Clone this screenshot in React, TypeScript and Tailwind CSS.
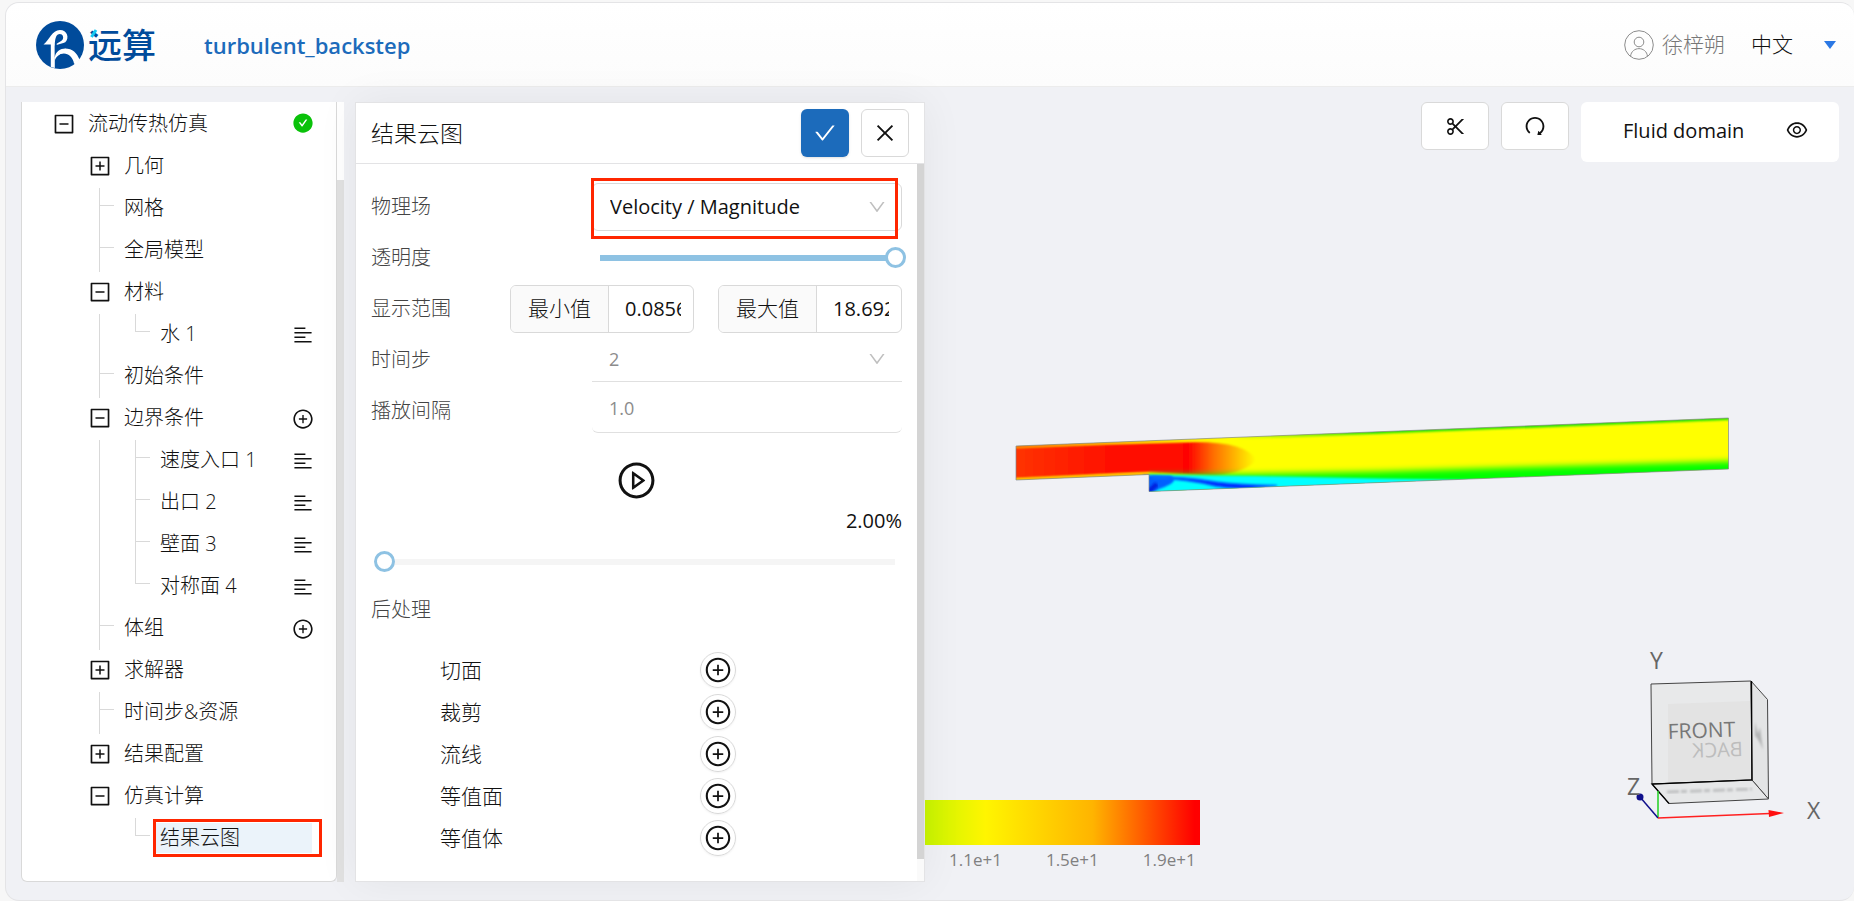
import { useState } from "react";
import type { ReactNode } from "react";
import { clsx } from "clsx";
import {
  AiFillCheckCircle,
  AiOutlineAlignLeft,
  AiOutlineCheck,
  AiOutlineClose,
  AiOutlineDown,
  AiOutlineEye,
  AiOutlineMinusSquare,
  AiOutlinePlayCircle,
  AiOutlinePlusCircle,
  AiOutlinePlusSquare,
  AiOutlineRedo,
  AiOutlineScissor,
} from "react-icons/ai";

type TreeItem = {
  label: string;
  level: 0 | 1 | 2;
  toggle?: "open" | "closed";
  last?: boolean;
  parentLine?: boolean;
  action?: "menu" | "add" | "done";
  selected?: boolean;
};

const tree: TreeItem[] = [
  { label: "流动传热仿真", level: 0, toggle: "open", action: "done" },
  { label: "几何", level: 1, toggle: "closed" },
  { label: "网格", level: 1 },
  { label: "全局模型", level: 1 },
  { label: "材料", level: 1, toggle: "open" },
  { label: "水 1", level: 2, last: true, parentLine: true, action: "menu" },
  { label: "初始条件", level: 1 },
  { label: "边界条件", level: 1, toggle: "open", action: "add" },
  { label: "速度入口 1", level: 2, parentLine: true, action: "menu" },
  { label: "出口 2", level: 2, parentLine: true, action: "menu" },
  { label: "壁面 3", level: 2, parentLine: true, action: "menu" },
  { label: "对称面 4", level: 2, last: true, parentLine: true, action: "menu" },
  { label: "体组", level: 1, action: "add" },
  { label: "求解器", level: 1, toggle: "closed" },
  { label: "时间步&资源", level: 1 },
  { label: "结果配置", level: 1, toggle: "closed" },
  { label: "仿真计算", level: 1, toggle: "open" },
  { label: "结果云图", level: 2, last: true, selected: true },
];

const postItems = ["切面", "裁剪", "流线", "等值面", "等值体"];

const sliderThumb =
  "[&::-webkit-slider-thumb]:appearance-none [&::-webkit-slider-thumb]:size-[21px] [&::-webkit-slider-thumb]:rounded-full [&::-webkit-slider-thumb]:border-[3px] [&::-webkit-slider-thumb]:border-[#8ec2e3] [&::-webkit-slider-thumb]:bg-white";

function Logo() {
  return (
    <div className="flex items-center gap-1 text-[#004b9b]">
      <svg viewBox="0 0 48 48" className="size-12">
        <circle cx="24" cy="24" r="24" fill="#004b9b" />
        <path
          d="M7.500 23.500 C13 19.500 16 9 24 9 C31 9 34 17 29 21.500 C27 23.500 24.500 24 22 26 L20.500 23 C24 20.500 28 19.500 27 15.500 C26 12 21 12.500 20 16 C19 19 18.800 21 18.800 25 V47 L14.800 46 V23.500 Z"
          fill="#fff"
        />
        <path
          d="M18.500 47.500 V37 C19 31 23.500 27.500 29 27.500 C36.500 27.500 41 32 43.500 38.500 L40 43.500 L38 42.500 C37 36 32 32 27 32.500 C22 33 18.500 36 18.500 40 Z"
          fill="#fff"
        />
        <path d="M18.800 24.500 L29 21.500 L29 27.500 L18.800 36 Z" fill="#004b9b" />
        <path
          d="M18.800 36 C20 30.500 24 27.500 29.500 27.500 L28 32 C23 33 19.500 36 18.800 40 Z"
          fill="#fff"
        />
      </svg>
      <span className="relative text-[34px] leading-10 font-medium">
        远算
        <svg
          viewBox="0 0 8 9"
          className="absolute top-1 left-0.5 h-[9px] w-2"
          stroke="#16c8f0"
          strokeWidth="3"
        >
          <path d="M1.500 8 L6 1" />
        </svg>
      </span>
    </div>
  );
}

function Header() {
  return (
    <header className="flex h-[84px] items-center border-b border-[#ececec] bg-linear-to-b from-white to-[#fcfcfc] pr-[18px] pl-[30px]">
      <Logo />
      <h1 className="ml-12 pt-0.5 text-[22px] font-semibold text-[#1c6bbb]">
        turbulent_backstep
      </h1>
      <div className="ml-auto flex items-center text-[21px]">
        <svg
          viewBox="0 0 30 30"
          className="size-[30px]"
          fill="none"
          stroke="#8c8c8c"
        >
          <circle cx="15" cy="15" r="14.300" />
          <circle cx="15" cy="12" r="4.800" />
          <path d="M6.500 26.500 C7.500 16 22.500 16 23.500 26.500" />
        </svg>
        <span className="ml-2 text-[#777]">徐梓朔</span>
        <button type="button" className="ml-[26px] flex items-center gap-[31px]">
          中文
          <svg viewBox="0 0 12 8" className="h-2 w-3" fill="#2b78e4">
            <path d="M0 0 H12 L6 8 Z" />
          </svg>
        </button>
      </div>
    </header>
  );
}

function TreeRow({ item }: { item: TreeItem }) {
  const { label, level, toggle, last, parentLine, action, selected } = item;
  return (
    <li
      className={clsx(
        "flex h-[42px] pr-[22px]",
        level === 0 ? "pl-[33px]" : "pl-[69px]",
      )}
    >
      {level === 2 && (
        <span
          className={clsx(
            "ml-2 w-7 shrink-0 border-l",
            parentLine ? "border-[#d9d9d9]" : "border-transparent",
          )}
        />
      )}
      {toggle ? (
        <button
          type="button"
          aria-label={label}
          className="-ml-[3px] flex w-9 shrink-0 items-center pb-[3px]"
        >
          {toggle === "open" ? (
            <AiOutlineMinusSquare size={24} />
          ) : (
            <AiOutlinePlusSquare size={24} />
          )}
        </button>
      ) : (
        <span className="ml-2 flex w-[25px] shrink-0 flex-col">
          <span className="h-[18px] w-[15px] border-b border-l border-[#d9d9d9]" />
          {!last && <span className="flex-1 border-l border-[#d9d9d9]" />}
        </span>
      )}
      <div className="flex flex-1 items-center pb-[3px]">
        <a
          href="#"
          className={clsx(
            "relative -ml-1 h-[30px] flex-1 pl-1 leading-[30px]",
            selected && "mr-0.5 bg-[#ebf3fa]",
          )}
        >
          {label}
          {selected && (
            <span className="absolute -top-1 -right-[10px] -bottom-1 -left-[3px] border-[3px] border-[#ff2600]" />
          )}
        </a>
      </div>
      {action === "done" && (
        <span className="flex items-center pb-[5px]">
          <AiFillCheckCircle size={22} color="#0ac20a" />
        </span>
      )}
      {(action === "add" || action === "menu") && (
        <button type="button" aria-label={`${label} ${action}`}>
          {action === "add" ? (
            <AiOutlinePlusCircle size={22} />
          ) : (
            <AiOutlineAlignLeft size={22} />
          )}
        </button>
      )}
    </li>
  );
}

function Sidebar() {
  return (
    <aside className="flex w-[323px] shrink-0">
      <ul className="flex-1 rounded-b-md border border-t-0 border-[#d9d9d9] bg-white pt-0.5 text-xl">
        {tree.map((item) => (
          <TreeRow key={item.label} item={item} />
        ))}
      </ul>
      <div className="w-[7px] bg-[#e1e1e1]">
        <div className="h-[10%] bg-white" />
      </div>
    </aside>
  );
}

function Field({
  id,
  label,
  children,
}: {
  id: string;
  label: string;
  children: ReactNode;
}) {
  return (
    <div className="flex h-[51px] items-center justify-between">
      <label htmlFor={id} className="text-[#444]">
        {label}
      </label>
      {children}
    </div>
  );
}

function RangeBox({
  id,
  label,
  value,
}: {
  id: string;
  label: string;
  value: string;
}) {
  return (
    <div className="flex h-12 w-[184px] overflow-hidden rounded-md border border-[#d9d9d9]">
      <label
        htmlFor={id}
        className="flex w-[98px] shrink-0 items-center justify-center border-r border-[#d9d9d9] bg-[#fafafa] text-[21px]"
      >
        {label}
      </label>
      <input
        id={id}
        defaultValue={value}
        className="w-full min-w-0 pr-3 pl-4 font-normal"
      />
    </div>
  );
}

function ResultPanel() {
  const [opacity, setOpacity] = useState(100);
  const [progress, setProgress] = useState(0);

  return (
    <section className="z-10 ml-[11px] flex w-[570px] shrink-0 flex-col border border-[#e3e3e5] bg-white shadow-[0_0_40px_rgba(0,0,0,0.06)]">
      <div className="flex h-[61px] items-center border-b border-[#e3e3e5] px-[15px]">
        <h2 className="text-[23px]">结果云图</h2>
        <button
          type="button"
          aria-label="确定"
          className="ml-auto flex size-12 items-center justify-center rounded-md bg-[#1c6bbb] text-white shadow-sm"
        >
          <AiOutlineCheck size={24} />
        </button>
        <button
          type="button"
          aria-label="关闭"
          className="ml-3 flex size-12 items-center justify-center rounded-md border border-[#d9d9d9]"
        >
          <AiOutlineClose size={24} />
        </button>
      </div>
      <div className="flex flex-1">
        <div className="min-w-0 flex-1 px-[15px] pt-[17px] pb-5 text-xl">
          <Field id="field" label="物理场">
            <div className="relative w-[310px]">
              <select
                id="field"
                className="h-12 w-full appearance-none rounded-md border border-[#d9d9d9] px-[17px] font-normal"
              >
                <option>Velocity / Magnitude</option>
              </select>
              <AiOutlineDown
                size={20}
                color="#bfbfbf"
                className="pointer-events-none absolute top-[14px] right-[15px]"
              />
              <span className="pointer-events-none absolute -top-[5px] right-1 -bottom-2 -left-px border-[3px] border-[#ff2600]" />
            </div>
          </Field>
          <Field id="opacity" label="透明度">
            <input
              id="opacity"
              type="range"
              value={opacity}
              onChange={(e) => setOpacity(Number(e.target.value))}
              className={clsx(
                "-mr-1 h-[21px] w-[316px] appearance-none bg-[linear-gradient(to_right,transparent_10px,#8ec2e3_10px,#8ec2e3_calc(100%-10px),transparent_calc(100%-10px))] bg-[length:100%_6px] bg-center bg-no-repeat",
                sliderThumb,
              )}
            />
          </Field>
          <Field id="min" label="显示范围">
            <div className="flex gap-6">
              <RangeBox id="min" label="最小值" value="0.0856" />
              <RangeBox id="max" label="最大值" value="18.692" />
            </div>
          </Field>
          <Field id="step" label="时间步">
            <div className="relative w-[310px]">
              <select
                id="step"
                className="h-11 w-full appearance-none border-b border-[#e0e0e0] px-[17px] text-lg font-normal text-[#8c8c8c]"
              >
                <option>2</option>
              </select>
              <AiOutlineDown
                size={20}
                color="#bfbfbf"
                className="pointer-events-none absolute top-[11px] right-[15px]"
              />
            </div>
          </Field>
          <Field id="interval" label="播放间隔">
            <input
              id="interval"
              defaultValue="1.0"
              className="h-11 w-[310px] rounded-md border-b border-[#e0e0e0] px-[17px] pb-1 text-lg font-normal text-[#8c8c8c]"
            />
          </Field>
          <div className="mt-6 flex justify-center">
            <button type="button" aria-label="播放">
              <AiOutlinePlayCircle size={41} />
            </button>
          </div>
          <p className="mt-1.5 text-right leading-7 font-normal">2.00%</p>
          <input
            type="range"
            aria-label="播放进度"
            value={progress}
            onChange={(e) => setProgress(Number(e.target.value))}
            className={clsx(
              "mt-4 ml-[3px] block h-[21px] w-full appearance-none bg-[linear-gradient(to_right,transparent_10px,#f5f5f5_10px,#f5f5f5_calc(100%-10px),transparent_calc(100%-10px))] bg-[length:100%_6px] bg-center bg-no-repeat",
              sliderThumb,
            )}
          />
          <h3 className="mt-6 leading-7 text-[#444]">后处理</h3>
          <ul className="mt-[25px] pl-[69px] text-[21px]">
            {postItems.map((name) => (
              <li key={name} className="flex h-[42px] items-center">
                <span className="w-[260px] pt-0.5">{name}</span>
                <button
                  type="button"
                  aria-label={name}
                  className="flex size-9 items-center justify-center rounded-full border border-[#d9d9d9] shadow-xs"
                >
                  <AiOutlinePlusCircle size={28} />
                </button>
              </li>
            ))}
          </ul>
        </div>
        <div className="flex w-[7px] shrink-0 flex-col bg-[#d4d4d4]">
          <div className="mt-auto h-[22px] bg-[#fafafa]" />
        </div>
      </div>
    </section>
  );
}

function FlowContour() {
  return (
    <svg viewBox="0 0 929 130" className="mt-auto mb-[100px] w-full">
      <defs>
        <clipPath id="channel">
          <path d="M91 46 L803.500 18 V69 L224 91.500 V74.500 L91 80 Z" />
        </clipPath>
        <linearGradient id="jet" gradientUnits="userSpaceOnUse" x1="91" x2="331">
          <stop offset="0" stopColor="#ff3300" />
          <stop offset="0.400" stopColor="#ff0f00" />
          <stop offset="0.720" stopColor="#ff0600" />
          <stop offset="0.820" stopColor="#ff6c00" />
          <stop offset="0.910" stopColor="#ffb400" />
          <stop offset="1" stopColor="#ffff00" />
        </linearGradient>
        <linearGradient id="edge" gradientUnits="userSpaceOnUse" x1="91" x2="450">
          <stop offset="0" stopColor="#ff6600" />
          <stop offset="0.400" stopColor="#ffd000" />
          <stop offset="0.600" stopColor="#ffff00" />
          <stop offset="1" stopColor="#22e600" />
        </linearGradient>
        <filter id="soft" x="-5%" y="-30%" width="110%" height="160%">
          <feGaussianBlur stdDeviation="1 0.800" />
        </filter>
        <filter id="softer" x="-5%" y="-60%" width="110%" height="220%">
          <feGaussianBlur stdDeviation="1 3" />
        </filter>
      </defs>
      <g clipPath="url(#channel)">
        <rect x="91" y="0" width="713" height="110" fill="#ffff00" />
        <path
          d="M80 48 L180 44 L270 42 Q322 42 331 60 Q322 72 290 76 L224 72 L80 79 Z"
          fill="url(#jet)"
          filter="url(#soft)"
        />
        <path
          d="M91 46 L804 18"
          stroke="url(#edge)"
          strokeWidth="4"
          filter="url(#soft)"
        />
        <path
          d="M91 80 L224 74"
          stroke="#ffb000"
          strokeWidth="3"
          filter="url(#soft)"
        />
        <path
          d="M224 75 L330 74 L455 71.500 L640 66 L820 61 V90 L224 110 Z"
          fill="#00ff00"
          filter="url(#softer)"
        />
        <path
          d="M224 75 L330 76 L455 78.500 L560 80 L700 76 V120 L224 120 Z"
          fill="#00ffff"
          filter="url(#soft)"
        />
        <path
          d="M218 75 L246 76 Q256 82 234 89 L218 98 Z"
          fill="#0060ff"
          filter="url(#soft)"
        />
        <path
          d="M228 77 Q262 77 285 81 Q310 85 352 85.500 Q316 91 290 86 Q262 79 228 78 Z"
          fill="#0010ff"
          stroke="#0070ff"
          strokeWidth="1.500"
          filter="url(#soft)"
        />
        <path
          d="M223 92 L232 84"
          stroke="#0020e0"
          strokeWidth="5"
          filter="url(#soft)"
        />
      </g>
      <path
        d="M91 46 L803.500 18 V69 L224 91.500 V74.500 L91 80 Z"
        fill="none"
        stroke="#808890"
        strokeOpacity="0.700"
      />
    </svg>
  );
}

function Legend() {
  return (
    <div className="pb-[7px]">
      <div className="h-[45px] w-[275px] bg-[linear-gradient(to_right,#c8f500,#fff500_22%,#ffb400_61%,#ff0000_98%)]" />
      <div className="flex gap-11 pl-6 text-[17px] leading-[30px] font-normal text-[#808080]">
        <span>1.1e+1</span>
        <span>1.5e+1</span>
        <span>1.9e+1</span>
      </div>
    </div>
  );
}

function OrientationCube() {
  return (
    <svg
      viewBox="0 0 254 220"
      className="mb-8 h-[220px] w-[254px]"
      fontFamily="'Open Sans', sans-serif"
      fontWeight="400"
    >
      <defs>
        <filter id="faded" x="-20%" y="-60%" width="140%" height="220%">
          <feGaussianBlur stdDeviation="1" />
        </filter>
      </defs>
      <g stroke="#444" strokeWidth="1" strokeLinejoin="round">
        <path d="M51 54 L151 51 L152 150 L52 154 Z" fill="#e8e9ea" />
        <path d="M151 51 L167.500 69.500 L168.500 169 L152 150 Z" fill="#e3e4e5" />
        <path d="M52 154 L152 150 L168.500 169 L69 173.500 Z" fill="#e6e7e8" />
      </g>
      <path d="M68 74 L150 71 V149 L68 152 Z" fill="#e3e3e3" />
      <path
        d="M151.500 51 L152 150 L52 154 L69 173.500"
        fill="none"
        stroke="#000"
        strokeWidth="1.300"
      />
      <text x="68" y="109" fontSize="21" fill="#777" transform="rotate(-2 68 109)">
        FRONT
      </text>
      <text
        fontSize="20"
        fill="#bdbdbd"
        transform="translate(143 126) rotate(-2) scale(-1 1)"
      >
        BACK
      </text>
      <path
        d="M155 92 L158 104 L160 97 L163 120 L160 113 L157 108 L155 106 Z"
        fill="#b4b5b6"
        filter="url(#faded)"
      />
      <path
        d="M67 162 L152 159"
        stroke="#c0c1c2"
        strokeWidth="3"
        strokeDasharray="12 2 6 3"
        filter="url(#faded)"
      />
      <path d="M58 161 V188" stroke="#20d020" strokeWidth="1.500" />
      <path d="M58 188 L40 167" stroke="#10108c" strokeWidth="1.500" />
      <circle cx="40" cy="167" r="3.500" fill="#10108c" />
      <path d="M58 188 L170 183.500" stroke="#ff2020" strokeWidth="1.500" />
      <path d="M168.500 180 L184 183 L169 187 Z" fill="#ff1010" />
      <g fontSize="23" fill="#666">
        <text x="50" y="39">Y</text>
        <text x="27" y="165">Z</text>
        <text x="207" y="189">X</text>
      </g>
    </svg>
  );
}

function Viewport() {
  return (
    <main className="flex min-w-0 flex-1 flex-col">
      <div className="flex items-start justify-end gap-3 pr-[15px]">
        <button
          type="button"
          aria-label="剪切"
          className="flex h-12 w-[68px] items-center justify-center rounded-md border border-[#d9d9d9] bg-white"
        >
          <AiOutlineScissor size={23} />
        </button>
        <button
          type="button"
          aria-label="重置"
          className="flex h-12 w-[68px] items-center justify-center rounded-md border border-[#d9d9d9] bg-white"
        >
          <AiOutlineRedo size={24} />
        </button>
        <div className="flex h-[60px] w-[258px] items-center justify-between rounded-md bg-white pr-[30px] pb-1 pl-[42px] text-xl font-normal">
          <span className="pt-0.5">Fluid domain</span>
          <button type="button" aria-label="显示">
            <AiOutlineEye size={24} />
          </button>
        </div>
      </div>
      <FlowContour />
      <div className="flex items-end justify-between">
        <Legend />
        <OrientationCube />
      </div>
    </main>
  );
}

export default function App() {
  return (
    <div className="flex min-h-screen flex-col bg-[#f7f7f7] pt-0.5 pl-[5px] font-['Open_Sans','Noto_Sans_CJK_SC',sans-serif] font-light text-[#111]">
      <div className="flex flex-1 flex-col overflow-hidden rounded-[14px] border border-r-0 border-[#e4e4e6] bg-[#f0f1f5]">
        <Header />
        <div className="flex flex-1 pt-[15px] pb-[18px] pl-[15px]">
          <Sidebar />
          <ResultPanel />
          <Viewport />
        </div>
      </div>
    </div>
  );
}
